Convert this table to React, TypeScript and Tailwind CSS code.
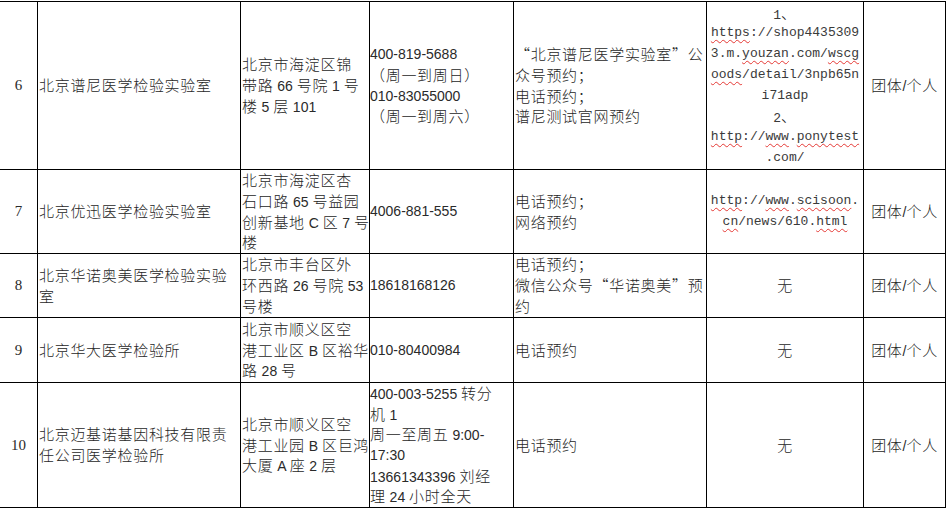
import React from 'react';

const CJK = /([\u2018-\u201d\u3000-\u303f\u3400-\u9fff\uff00-\uffef]+)/;

function T({ s }: { s: string }) {
  const parts = s.split(CJK);
  return (
    <>
      {parts.map((p, i) =>
        p === '' ? null : CJK.test(p) ? (
          <span key={i} className="font-['Noto_Sans_CJK_SC'] font-light text-[15px] tracking-[0.7px] text-[#262626]">
            {p}
          </span>
        ) : (
          <span key={i}>{p}</span>
        )
      )}
    </>
  );
}

function L({ children }: { children: React.ReactNode }) {
  return <div className="h-[20.7px] leading-[20.7px] whitespace-nowrap">{children}</div>;
}

function Lines({ lines }: { lines: string[] }) {
  return (
    <>
      {lines.map((l, i) => (
        <L key={i}>
          <T s={l} />
        </L>
      ))}
    </>
  );
}

function W({ children }: { children: React.ReactNode }) {
  return (
    <span className="underline decoration-wavy decoration-[#e53935] decoration-1 underline-offset-[3px]">
      {children}
    </span>
  );
}

function Cell({
  children,
  className = '',
  mono = false,
}: {
  children?: React.ReactNode;
  className?: string;
  mono?: boolean;
}) {
  const font = mono
    ? "font-['Liberation_Mono'] text-[13px] text-[#3a3a3a]"
    : "font-['Liberation_Sans'] text-[14px] text-[#2a2a2a]";
  return (
    <div
      className={`flex flex-col justify-center overflow-hidden border-r border-b border-black ${font} ${className}`}
    >
      {children}
    </div>
  );
}

function Num({ n }: { n: string }) {
  return (
    <Cell className="items-center">
      <div className="font-['Liberation_Serif'] text-[15px]">{n}</div>
    </Cell>
  );
}

function Who() {
  return (
    <Cell className="items-center">
      <L>
        <T s="团体/个人" />
      </L>
    </Cell>
  );
}

function None() {
  return (
    <Cell className="items-center">
      <L>
        <T s="无" />
      </L>
    </Cell>
  );
}

export default function App() {
  return (
    <div className="w-[946px] h-[509px] bg-white pt-px overflow-hidden">
      <div className="grid grid-cols-[38px_203px_129px_144px_193px_157px_82px] grid-rows-[168px_84px_64px_65px_125px] border-t border-black">
        {/* Row 6 */}
        <Num n="6" />
        <Cell className="pl-[1px]">
          <Lines lines={['北京谱尼医学检验实验室']} />
        </Cell>
        <Cell className="pl-[1px]">
          <Lines lines={['北京市海淀区锦', '带路 66 号院 1 号', '楼 5 层 101']} />
        </Cell>
        <Cell>
          <Lines lines={['400-819-5688', '（周一到周日）', '010-83055000', '（周一到周六）']} />
        </Cell>
        <Cell className="pl-[1px]">
          <Lines lines={['“北京谱尼医学实验室”公', '众号预约；', '电话预约；', '谱尼测试官网预约']} />
        </Cell>
        <Cell mono className="items-center">
          <L>
            <T s="1、" />
          </L>
          <L>
            <W>https</W>://shop4435309
          </L>
          <L>
            3.m.<W>youzan</W>.com/<W>wscg</W>
          </L>
          <L>
            <W>oods</W>/detail/3npb65n
          </L>
          <L>i71adp</L>
          <L>
            <T s="2、" />
          </L>
          <L>
            <W>http</W>://<W>www</W>.<W>ponytest</W>
          </L>
          <L>.com/</L>
        </Cell>
        <Who />

        {/* Row 7 */}
        <Num n="7" />
        <Cell className="pl-[1px]">
          <Lines lines={['北京优迅医学检验实验室']} />
        </Cell>
        <Cell className="pl-[1px]">
          <Lines lines={['北京市海淀区杏', '石口路 65 号益园', '创新基地 C 区 7 号', '楼']} />
        </Cell>
        <Cell>
          <Lines lines={['4006-881-555']} />
        </Cell>
        <Cell className="pl-[1px]">
          <Lines lines={['电话预约；', '网络预约']} />
        </Cell>
        <Cell mono className="items-center">
          <L>
            <W>http</W>://<W>www</W>.<W>scisoon</W>.
          </L>
          <L>
            <W>cn</W>/news/610.<W>html</W>
          </L>
        </Cell>
        <Who />

        {/* Row 8 */}
        <Num n="8" />
        <Cell className="pl-[1px]">
          <Lines lines={['北京华诺奥美医学检验实验', '室']} />
        </Cell>
        <Cell className="pl-[1px]">
          <Lines lines={['北京市丰台区外', '环西路 26 号院 53', '号楼']} />
        </Cell>
        <Cell>
          <Lines lines={['18618168126']} />
        </Cell>
        <Cell className="pl-[1px]">
          <Lines lines={['电话预约；', '微信公众号“华诺奥美”预', '约']} />
        </Cell>
        <None />
        <Who />

        {/* Row 9 */}
        <Num n="9" />
        <Cell className="pl-[1px]">
          <Lines lines={['北京华大医学检验所']} />
        </Cell>
        <Cell className="pl-[1px]">
          <Lines lines={['北京市顺义区空', '港工业区 B 区裕华', '路 28 号']} />
        </Cell>
        <Cell>
          <Lines lines={['010-80400984']} />
        </Cell>
        <Cell className="pl-[1px]">
          <Lines lines={['电话预约']} />
        </Cell>
        <None />
        <Who />

        {/* Row 10 */}
        <Num n="10" />
        <Cell className="pl-[1px]">
          <Lines lines={['北京迈基诺基因科技有限责', '任公司医学检验所']} />
        </Cell>
        <Cell className="pl-[1px]">
          <Lines lines={['北京市顺义区空', '港工业园 B 区巨鸿', '大厦 A 座 2 层']} />
        </Cell>
        <Cell>
          <Lines
            lines={['400-003-5255 转分', '机 1', '周一至周五 9:00-', '17:30', '13661343396 刘经', '理 24 小时全天']}
          />
        </Cell>
        <Cell className="pl-[1px]">
          <Lines lines={['电话预约']} />
        </Cell>
        <None />
        <Who />
      </div>
    </div>
  );
}
